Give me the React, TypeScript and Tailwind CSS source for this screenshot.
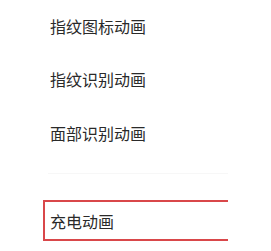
const items = ['指纹图标动画', '指纹识别动画', '面部识别动画'];

export default function App() {
    return (
        <div className="w-[271px] h-[251px] bg-white overflow-hidden font-['Noto_Sans_CJK_SC',sans-serif] text-[16px] text-[#2a2a2a]">
            <div className="pl-[50px]">
                {items.map((label, i) => (
                    <div key={label} className={`flex items-center ${i === 0 ? 'h-[52px]' : 'h-[54px]'}`}>
                        {label}
                    </div>
                ))}
            </div>
            <div className="ml-[48px] mt-[13px] w-[180px] h-px bg-[#f7f7f7]" />
            <div className="ml-[43px] mt-[26px] w-[185px] h-[41px] border-2 border-r-0 border-[#d9474a] flex items-center pl-[5px]">
                充电动画
            </div>
        </div>
    );
}
